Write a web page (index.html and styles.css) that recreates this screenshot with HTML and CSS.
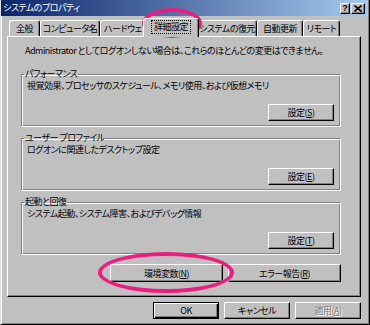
FILE: index.html
```html
<!DOCTYPE html>
<html lang="ja">
<head>
    <meta charset="UTF-8">
    <title>システムのプロパティ</title>
    <link rel="stylesheet" href="styles.css">
</head>
<body>
    <div class="window">
        <div class="titlebar">
            <span class="title">システムのプロパティ</span>
            <div class="caption-buttons">
                <span class="cap-btn help">?</span>
                <span class="cap-btn close">
                    <svg width="8" height="7" viewBox="0 0 8 7"><path d="M0.5 0.5L7.5 6.5M7.5 0.5L0.5 6.5" stroke="#000" stroke-width="1.6"/></svg>
                </span>
            </div>
        </div>

        <div class="content">
            <div class="tabs">
                <div class="tab tab-general">全般</div>
                <div class="tab tab-computer">コンピュータ名</div>
                <div class="tab tab-hardware">ハードウェア</div>
                <div class="tab active"><span class="focus">詳細設定</span></div>
                <div class="tab tab-restore">システムの復元</div>
                <div class="tab tab-update">自動更新</div>
                <div class="tab tab-remote">リモート</div>
            </div>

            <div class="panel">
                <p class="note">Administrator としてログオンしない場合は、これらのほとんどの変更はできません。</p>

                <fieldset class="group">
                    <legend>パフォーマンス</legend>
                    <p>視覚効果、プロセッサのスケジュール、メモリ使用、および仮想メモリ</p>
                    <div class="group-actions"><button>設定(<u>S</u>)</button></div>
                </fieldset>

                <fieldset class="group">
                    <legend>ユーザー プロファイル</legend>
                    <p>ログオンに関連したデスクトップ設定</p>
                    <div class="group-actions"><button>設定(<u>E</u>)</button></div>
                </fieldset>

                <fieldset class="group">
                    <legend>起動と回復</legend>
                    <p>システム起動、システム障害、およびデバッグ情報</p>
                    <div class="group-actions"><button>設定(<u>T</u>)</button></div>
                </fieldset>

                <div class="env-row">
                    <button class="wide">環境変数(<u>N</u>)</button>
                    <button class="wide">エラー報告(<u>R</u>)</button>
                </div>
            </div>

            <div class="dialog-buttons">
                <button class="default">OK</button>
                <button>キャンセル</button>
                <button class="disabled">適用(<u>A</u>)</button>
            </div>
        </div>

        <!-- pink highlight marks drawn over the dialog -->
        <div class="mark mark-tab"></div>
        <div class="mark mark-env"></div>
    </div>
</body>
</html>
```

FILE: styles.css
```css
body {
    margin: 0;
    font-family: "Noto Sans CJK JP", "Liberation Sans", sans-serif;
    font-size: 9px;
    letter-spacing: -0.5px;
    font-feature-settings: "palt";
    color: #000;
}
.window {
    position: relative;
    width: 370px;
    height: 325px;
    box-sizing: border-box;
    display: flex;
    flex-direction: column;
    background: #c0c0c0;
    border-left: 1px solid #dfdfdf;
    border-right: 1px solid #000;
    border-bottom: 1px solid #000;
    box-shadow: inset 1px 0 #fff, inset -1px -1px #808080;
}
.titlebar {
    height: 16px;
    flex: none;
    display: flex;
    align-items: center;
    justify-content: space-between;
    padding: 0 3px 0 2px;
    margin-right: 1px;
    background: linear-gradient(to right, #0a246a, #a6caf0);
    color: #fff;
}
.title {
    line-height: 12px;
}
.caption-buttons {
    display: flex;
    gap: 1px;
}
.cap-btn {
    height: 11px;
    box-sizing: border-box;
    display: flex;
    align-items: center;
    justify-content: center;
    background: #c0c0c0;
    border: 1px solid;
    border-color: #fff #000 #000 #fff;
    box-shadow: inset -1px -1px #808080;
    color: #000;
}
.cap-btn.help {
    width: 10px;
    font-family: "Liberation Sans", sans-serif;
    font-weight: bold;
    font-size: 9px;
    line-height: 9px;
    letter-spacing: 0;
}
.cap-btn.close {
    width: 14px;
}
.content {
    flex: 1;
    display: flex;
    flex-direction: column;
    padding: 0 8px 0 6px;
}
.tabs {
    height: 20px;
    flex: none;
    display: flex;
    align-items: flex-end;
    padding-left: 2px;
}
.tab {
    height: 16px;
    box-sizing: border-box;
    padding: 2px 0 0;
    line-height: 12px;
    white-space: nowrap;
    overflow: hidden;
    text-align: center;
    border: 1px solid #fff;
    border-bottom: none;
    border-right-color: #000;
    border-radius: 3px 3px 0 0;
    box-shadow: inset -1px 0 #808080;
}
.tab-general { width: 31px; }
.tab-computer { width: 60px; }
.tab-hardware { width: 45px; text-align: left; padding-left: 3px; }
.tab-restore { width: 60px; }
.tab-update { width: 46px; }
.tab-remote { width: 37px; }
.tab.active {
    position: relative;
    z-index: 1;
    width: 56px;
    height: 19px;
    margin: 0 -2px -1px;
    padding: 2px 0 0;
    background: #c0c0c0;
}
.focus {
    display: inline-block;
    padding: 0 2px;
    outline: 1px dotted #000;
}
.panel {
    flex: 1;
    display: flex;
    flex-direction: column;
    padding: 8px 19px 0 13px;
    border: 1px solid;
    border-color: #fff #000 #000 #fff;
    box-shadow: inset -1px -1px #808080;
}
.note {
    margin: 0 0 11px;
    padding-left: 4px;
    line-height: 12px;
    white-space: nowrap;
}
.group {
    margin: 0 0 5px;
    padding: 0 6px 5px 5px;
    border: 1px solid;
    border-color: #808080 #fff #fff #808080;
    box-shadow: inset 1px 1px #fff, inset -1px -1px #808080;
}
.group legend {
    padding: 0 1px;
    margin-left: -3px;
    line-height: 12px;
}
.group p {
    margin: 0;
    line-height: 12px;
}
.group-actions {
    display: flex;
    justify-content: flex-end;
    margin-top: 12px;
}
button {
    height: 17px;
    box-sizing: border-box;
    padding: 0;
    font: inherit;
    letter-spacing: inherit;
    line-height: 13px;
    color: #000;
    background: #c0c0c0;
    border: 1px solid;
    border-color: #fff #000 #000 #fff;
    box-shadow: inset -1px -1px #808080;
}
.group-actions button {
    width: 66px;
}
.env-row {
    display: flex;
    justify-content: flex-end;
    gap: 5px;
    margin-top: 4px;
}
.env-row button {
    width: 113px;
    height: 18px;
}
.dialog-buttons {
    display: flex;
    justify-content: flex-end;
    gap: 5px;
    margin: 5px 0 5px;
}
.dialog-buttons button {
    width: 66px;
}
button.default {
    border-color: #000;
    box-shadow: inset 1px 1px #fff, inset -1px -1px #000, inset -2px -2px #808080;
}
button.disabled {
    color: #808080;
    text-shadow: 1px 1px #fff;
}
.mark {
    position: absolute;
    box-sizing: border-box;
    border: 4px solid #e91e7f;
    border-radius: 50%;
    pointer-events: none;
}
.mark-tab {
    left: 141px;
    top: 8px;
    width: 60px;
    height: 30px;
}
.mark-env {
    left: 97px;
    top: 252px;
    width: 136px;
    height: 41px;
}
```
